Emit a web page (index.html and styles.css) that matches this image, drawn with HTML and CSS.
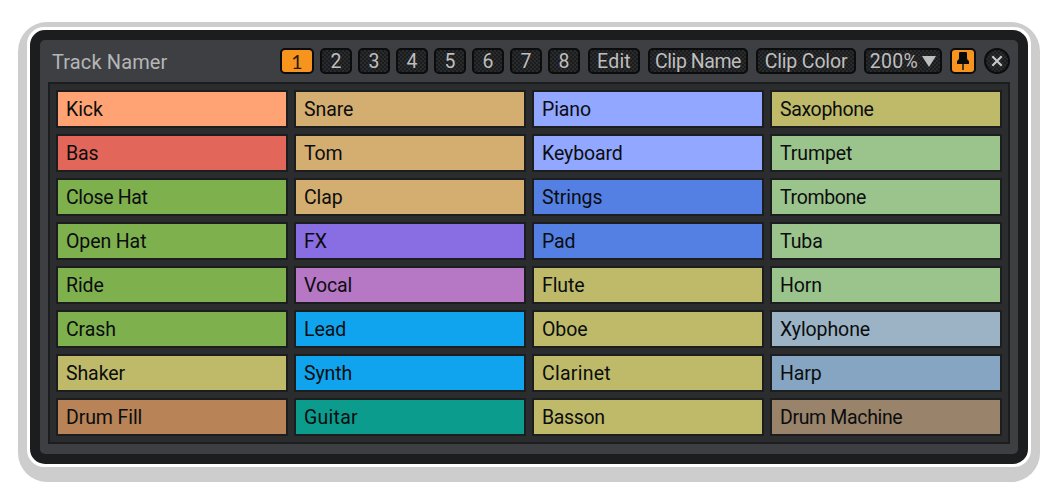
FILE: index.html
```html
<!DOCTYPE html>
<html lang="en">
<head>
<meta charset="utf-8">
<title>Track Namer</title>
<link rel="stylesheet" href="styles.css">
</head>
<body>
<div class="halo">
<div class="rim">
<main class="window">
  <header class="toolbar">
    <h1 class="title">Track Namer</h1>
    <nav class="pages">
      <button class="btn active one">1</button>
      <button class="btn">2</button>
      <button class="btn">3</button>
      <button class="btn">4</button>
      <button class="btn">5</button>
      <button class="btn">6</button>
      <button class="btn">7</button>
      <button class="btn">8</button>
    </nav>
    <div class="actions">
      <button class="btn edit">Edit</button>
      <button class="btn clip clip-name">Clip Name</button>
      <button class="btn clip">Clip Color</button>
      <button class="btn zoom">200%<svg width="14" height="11" viewBox="0 0 14 11"><path d="M0 0h14L7 11z" fill="#bebebe"/></svg></button>
      <button class="btn active pin" aria-label="Pin"><svg width="22" height="22" viewBox="0 0 22 22"><path d="M7 3q0-1 1-1h6q1 0 1 1v5q0 2 2 3v3H5v-3q2-1 2-3z" fill="#0a0a0a"/><path d="M11 14v6" stroke="#453a1d" stroke-width="2"/></svg></button>
      <button class="btn close" aria-label="Close"><svg width="22" height="22" viewBox="0 0 22 22"><path d="M6.3 6.3l9.4 9.4M15.7 6.3l-9.4 9.4" stroke="#c6c6c6" stroke-width="2.3"/></svg></button>
    </div>
  </header>
  <section class="grid">
    <div class="cell peach">Kick</div><div class="cell tan">Snare</div><div class="cell peri">Piano</div><div class="cell olive tight">Saxophone</div>
    <div class="cell red">Bas</div><div class="cell tan">Tom</div><div class="cell peri">Keyboard</div><div class="cell mint">Trumpet</div>
    <div class="cell green tight">Close Hat</div><div class="cell tan">Clap</div><div class="cell blue">Strings</div><div class="cell mint tight">Trombone</div>
    <div class="cell green">Open Hat</div><div class="cell violet">FX</div><div class="cell blue">Pad</div><div class="cell mint">Tuba</div>
    <div class="cell green">Ride</div><div class="cell orchid">Vocal</div><div class="cell olive">Flute</div><div class="cell mint">Horn</div>
    <div class="cell green">Crash</div><div class="cell sky">Lead</div><div class="cell olive">Oboe</div><div class="cell mist">Xylophone</div>
    <div class="cell olive">Shaker</div><div class="cell sky">Synth</div><div class="cell olive loose">Clarinet</div><div class="cell steel">Harp</div>
    <div class="cell brown">Drum Fill</div><div class="cell teal loose">Guitar</div><div class="cell olive tight">Basson</div><div class="cell taupe tight">Drum Machine</div>
  </section>
</main>
</div>
</div>
</body>
</html>
```
FILE: styles.css
```css
* { box-sizing: border-box; }
body {
  margin: 0;
  padding: 22px 18px 12px;
  height: 494px;
  overflow: hidden;
  background: #fff;
  font-family: Roboto, "Liberation Sans", sans-serif;
}
.halo {
  width: 1022px;
  height: 460px;
  padding: 5px 9px 15px;
  border-radius: 29px;
  background: #cdcdcd;
}
.rim {
  height: 440px;
  padding: 3px;
  border-radius: 17px;
  background: #fff;
}
.window {
  height: 434px;
  border: 10px solid #1c1d1f;
  border-radius: 15px;
  background: #3e3f43;
  padding: 8px;
}
.toolbar {
  display: flex;
  height: 34px;
  align-items: flex-start;
}
.title {
  width: 232px;
  margin: 0;
  padding-left: 4px;
  font-size: 20px;
  font-weight: 400;
  line-height: 28px;
  letter-spacing: .12px;
  color: #b5b6b7;
}
.pages { display: flex; gap: 6px; margin-right: 8px; }
.actions { display: flex; gap: 8px; }
.btn {
  display: flex;
  align-items: center;
  justify-content: center;
  width: 32px;
  height: 26px;
  padding: 1px 0 0;
  border: 2px solid #0b0c0d;
  border-radius: 5px;
  font: 19.5px/23px Roboto, sans-serif;
  color: #bebebe;
  background:
    radial-gradient(circle at 1px 1px, #303133 .6px, transparent 1px) 0 0 / 4px 4px,
    radial-gradient(circle at 3px 3px, #303133 .6px, transparent 1px) 0 0 / 4px 4px,
    #1b1c1e;
}
.active { background: #f7941e; color: #261a10; }
.one { width: 34px; padding: 0; font-family: Lato, sans-serif; }
.edit { width: 52px; letter-spacing: .2px; }
.clip { width: 100px; letter-spacing: -.15px; }
.clip-name { letter-spacing: -.45px; }
.zoom { width: 78px; gap: 4px; letter-spacing: .3px; }
.pin, .close { width: 26px; padding: 0; }
.close { border-radius: 50%; }
.grid {
  display: grid;
  grid-template-columns: repeat(4, 232px);
  grid-auto-rows: 38px;
  gap: 6px;
  height: 362px;
  padding: 6px;
  border: 2px solid #1c1d1f;
  background: #2b2c2e;
}
.cell {
  border: 2px solid #1c1d1f;
  padding-left: 8px;
  font-size: 19.5px;
  line-height: 35px;
  letter-spacing: -.1px;
  color: #0b0d0e;
}
.tight { letter-spacing: -.35px; }
.loose { letter-spacing: .25px; }
.peach { background: #ffa374; }
.red { background: #e2665a; }
.green { background: #7eb04e; }
.olive { background: #bfba69; }
.brown { background: #b88356; }
.tan { background: #d4ad71; }
.violet { background: #896de2; }
.orchid { background: #b677c5; }
.sky { background: #10a4ee; }
.teal { background: #0c9c8d; }
.peri { background: #92a7ff; }
.blue { background: #5480e4; }
.mint { background: #9bc48d; }
.mist { background: #9bb3c4; }
.steel { background: #85a5c2; }
.taupe { background: #99836a; }
```
